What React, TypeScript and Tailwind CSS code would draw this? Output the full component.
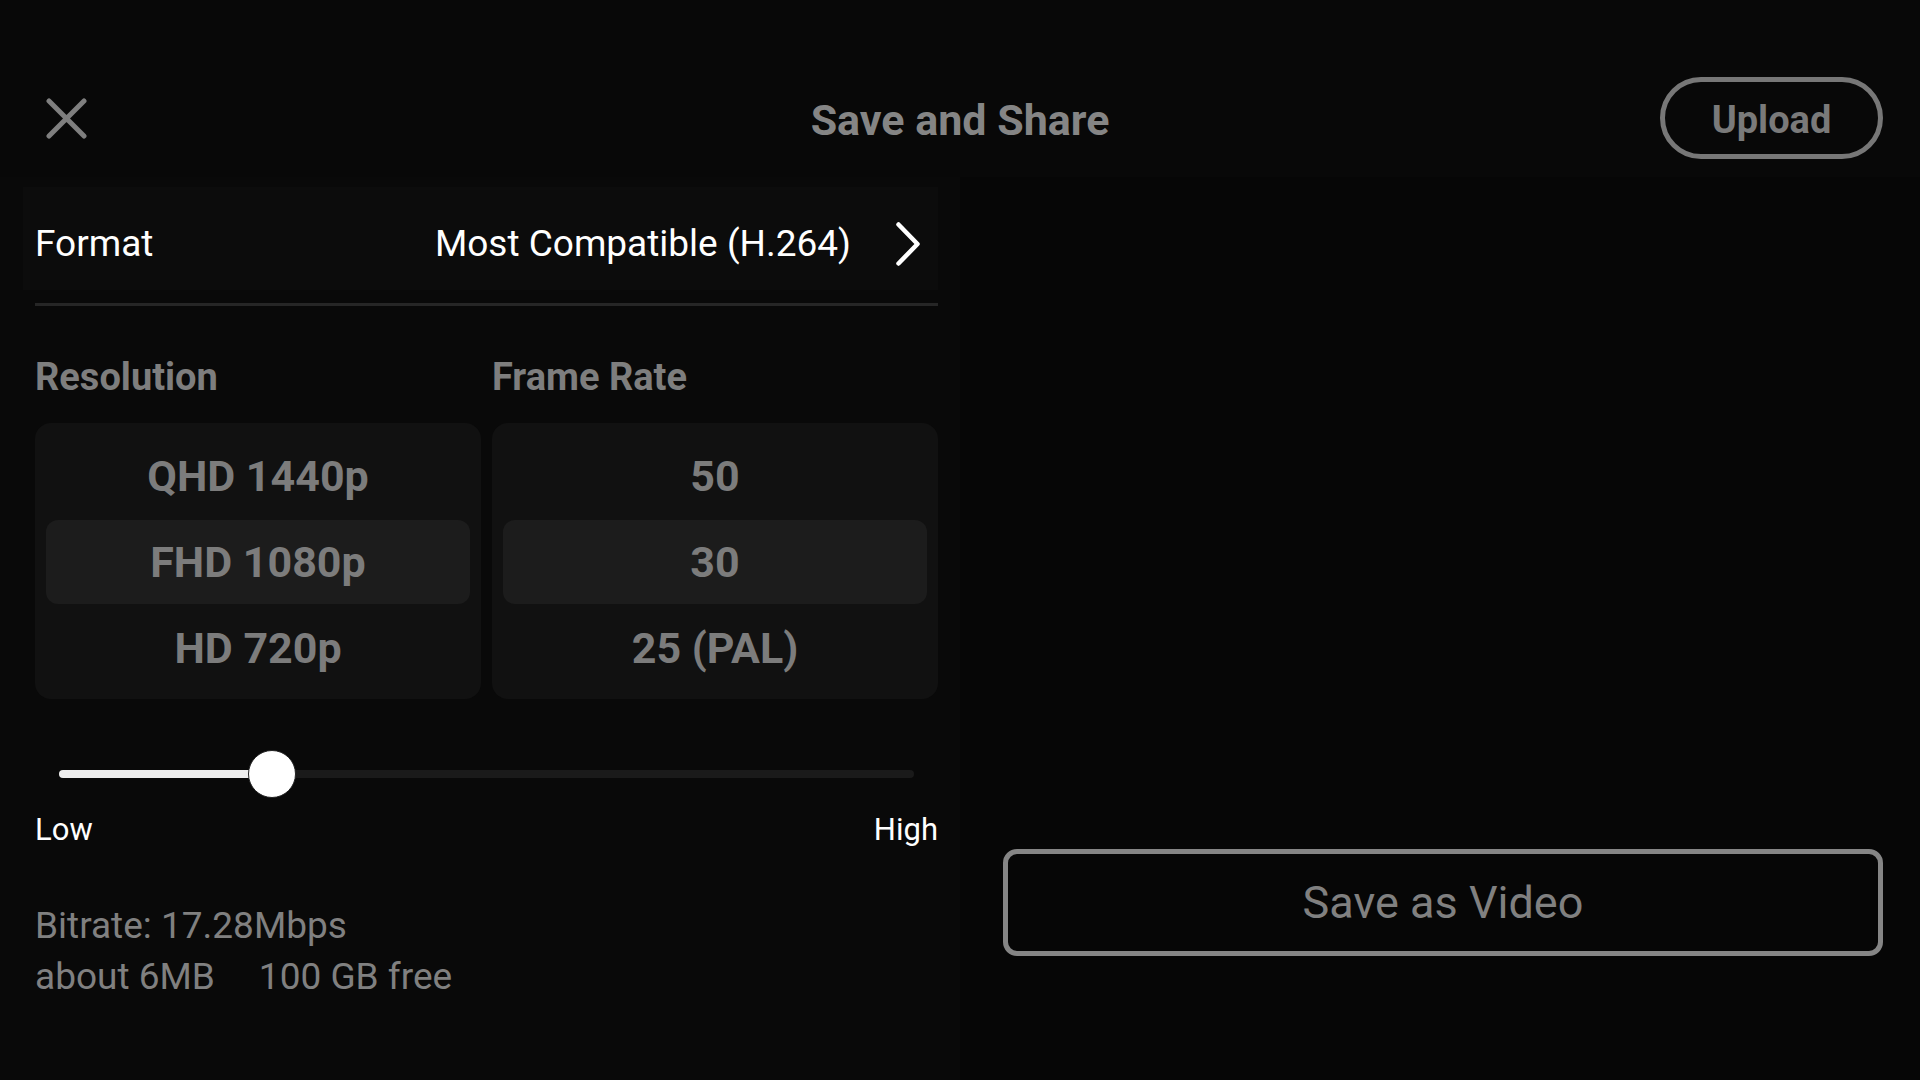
const resolutions = ["QHD 1440p", "FHD 1080p", "HD 720p"];
const frameRates = ["50", "30", "25 (PAL)"];

function Picker({ items, selected }: { items: string[]; selected: number }) {
  return (
    <div className="flex flex-col gap-[2px] rounded-[16px] bg-[#111111] px-[11px] pb-[9px] pt-[11px]">
      {items.map((item, i) => (
        <div
          key={item}
          className={
            "flex h-[84px] items-center justify-center rounded-[12px] text-[43px] font-bold text-[#7c7c7c] " +
            (i === selected ? "bg-[#1c1c1c]" : "")
          }
        >
          {item}
        </div>
      ))}
    </div>
  );
}

export default function App() {
  const quality = 0.249;

  return (
    <div className="flex h-[1080px] w-[1920px] flex-col overflow-hidden bg-[#080808] font-['Roboto','Noto_Sans',sans-serif]">
      {/* Header */}
      <div className="h-[177px] shrink-0 px-[37px] pt-[77px]">
        <div className="grid h-[82px] grid-cols-[1fr_auto_1fr] items-center">
          <div className="ml-[9px] flex">
            <svg width="41" height="41" viewBox="0 0 41 41" fill="none">
              <path d="M3 3L38 38M38 3L3 38" stroke="#7f7f7f" strokeWidth="5" strokeLinecap="round" />
            </svg>
          </div>
          <h1 className="pt-[4px] text-[43px] font-bold leading-none text-[#858585]">Save and Share</h1>
          <div className="flex justify-end">
            <button className="flex h-[82px] w-[223px] items-center justify-center rounded-full border-[5px] border-[#777777] pt-[4px] text-[38px] font-bold text-[#7a7a7a]">
              Upload
            </button>
          </div>
        </div>
      </div>

      {/* Body */}
      <div className="flex flex-1 bg-[#060606]">
        {/* Settings column */}
        <div className="w-[960px] bg-[#090909] pl-[23px] pr-[22px]">
          <div className="mt-[10px] flex h-[103px] items-center justify-between bg-[#0c0c0c] pl-[12px] pr-[18px] pt-[10px] text-[37px] text-white">
            <span>Format</span>
            <div className="flex items-center gap-[45px]">
              <span>Most Compatible (H.264)</span>
              <svg width="24" height="44" viewBox="0 0 24 44" fill="none">
                <path d="M2.5 2.5L21.5 22L2.5 41.5" stroke="white" strokeWidth="4.5" strokeLinecap="round" strokeLinejoin="round" />
              </svg>
            </div>
          </div>
          <div className="ml-[12px] mt-[13px] h-[3px] bg-[#262626]" />

          <div className="ml-[12px]">
            <div className="mt-[50px] grid grid-cols-2 gap-[11px] text-[38px] font-bold leading-[43px] text-[#7e7e7e]">
              <span>Resolution</span>
              <span>Frame Rate</span>
            </div>
            <div className="mt-[24px] grid grid-cols-2 gap-[11px]">
              <Picker items={resolutions} selected={1} />
              <Picker items={frameRates} selected={1} />
            </div>

            {/* Quality slider */}
            <div className="relative mx-[24px] mt-[51px] flex h-[48px] items-center">
              <div className="h-[8px] w-full rounded-full bg-[#1a1a1a]" />
              <div
                className="absolute left-0 h-[8px] rounded-full bg-[#eeeeee]"
                style={{ width: `${quality * 100}%` }}
              />
              <div
                className="absolute top-0 h-[48px] w-[48px] -translate-x-1/2 rounded-full border border-[#222222] bg-white"
                style={{ left: `${quality * 100}%` }}
              />
            </div>
            <div className="mt-[14px] flex justify-between text-[31px] leading-[36px] text-white">
              <span>Low</span>
              <span>High</span>
            </div>

            <div className="mt-[52px] text-[37px] leading-[51px] text-[#808080]">
              <div>Bitrate: 17.28Mbps</div>
              <div className="flex gap-[44px]">
                <span>about 6MB</span>
                <span>100 GB free</span>
              </div>
            </div>
          </div>
        </div>

        {/* Preview / action column */}
        <div className="flex flex-1 flex-col justify-end pb-[124px] pl-[43px] pr-[37px]">
          <button className="flex h-[107px] w-full items-center justify-center rounded-[14px] border-[5px] border-[#858585] text-[45px] text-[#808080]">
            Save as Video
          </button>
        </div>
      </div>
    </div>
  );
}
